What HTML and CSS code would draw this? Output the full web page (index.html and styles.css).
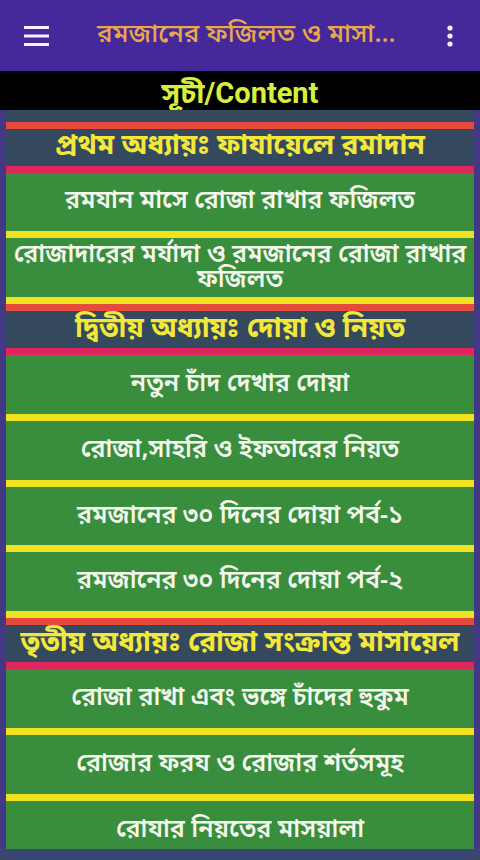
FILE: index.html
```html
<!DOCTYPE html>
<html lang="bn">
<head>
<meta charset="utf-8">
<meta name="viewport" content="width=480">
<title>রমজানের ফজিলত ও মাসায়েল</title>
<link rel="stylesheet" href="styles.css">
</head>
<body>
<header class="appbar">
  <button class="icon-btn menu" aria-label="menu">
    <svg width="26" height="22" viewBox="0 0 26 22"><rect x="0" y="1" width="25" height="3" fill="#f4f0ff"/><rect x="0" y="9.5" width="25" height="3" fill="#f4f0ff"/><rect x="0" y="18" width="25" height="3" fill="#f4f0ff"/></svg>
  </button>
  <h1 class="appbar-title">রমজানের ফজিলত ও মাসা...</h1>
  <button class="icon-btn more" aria-label="more">
    <svg width="8" height="22" viewBox="0 0 8 22"><circle cx="4" cy="3" r="2.6" fill="#f4f0ff"/><circle cx="4" cy="11" r="2.6" fill="#f4f0ff"/><circle cx="4" cy="19" r="2.6" fill="#f4f0ff"/></svg>
  </button>
</header>
<div class="content-title">সূচী/Content</div>
<main class="list">
  <section class="chapter">
    <h2 class="chapter-head">প্রথম অধ্যায়ঃ ফাযায়েলে রমাদান</h2>
    <div class="item">রমযান মাসে রোজা রাখার ফজিলত</div>
    <div class="item">রোজাদারের মর্যাদা ও রমজানের রোজা রাখার ফজিলত</div>
  </section>
  <section class="chapter">
    <h2 class="chapter-head">দ্বিতীয় অধ্যায়ঃ দোয়া ও নিয়ত</h2>
    <div class="item">নতুন চাঁদ দেখার দোয়া</div>
    <div class="item">রোজা,সাহরি ও ইফতারের নিয়ত</div>
    <div class="item">রমজানের ৩০ দিনের দোয়া পর্ব-১</div>
    <div class="item">রমজানের ৩০ দিনের দোয়া পর্ব-২</div>
  </section>
  <section class="chapter">
    <h2 class="chapter-head">তৃতীয় অধ্যায়ঃ রোজা সংক্রান্ত মাসায়েল</h2>
    <div class="item">রোজা রাখা এবং ভঙ্গে চাঁদের হুকুম</div>
    <div class="item">রোজার ফরয ও রোজার শর্তসমূহ</div>
    <div class="item">রোযার নিয়তের মাসয়ালা</div>
  </section>
</main>
<div class="bottom-edge"></div>
</body>
</html>
```

FILE: styles.css
```css
* { box-sizing: border-box; }
html, body {
  margin: 0;
  padding: 0;
}
body {
  width: 480px;
  height: 860px;
  overflow: hidden;
  background: #433883;
  display: flex;
  flex-direction: column;
  font-family: "Noto Sans Bengali", "Lohit Bengali", "FreeSans", "Noto Sans", Roboto, sans-serif;
}
.appbar {
  flex: none;
  height: 71px;
  background: #45299a;
  display: flex;
  align-items: center;
  padding: 0 26px 0 24px;
}
.icon-btn {
  background: none;
  border: 0;
  padding: 0;
  display: flex;
  align-items: center;
}
.menu { width: 26px; }
.more { width: 8px; margin-left: auto; }
.appbar-title {
  margin: 0 0 0 47px;
  font-size: 26px;
  line-height: 30px;
  font-weight: 500;
  color: #eaa948;
  white-space: nowrap;
}
.content-title {
  flex: none;
  height: 39px;
  padding-top: 4px;
  background: #000;
  color: #d6ef3c;
  font-family: Roboto, "Noto Sans Bengali", "Noto Sans", sans-serif;
  font-weight: 700;
  font-size: 29px;
  line-height: 30px;
  display: flex;
  align-items: center;
  justify-content: center;
}
.list {
  flex: 1;
  min-height: 0;
  overflow: hidden;
  margin: 0 6px;
  padding-top: 12px;
  background: #34495e;
}
.chapter-head {
  margin: 0;
  height: 50.5px;
  border-top: 7px solid #e54a3a;
  border-bottom: 7px solid #e0245e;
  background: #34495e;
  color: #f3e73a;
  font-size: 28px;
  line-height: 32px;
  font-weight: 700;
  display: flex;
  align-items: center;
  justify-content: center;
  white-space: nowrap;
}
.item {
  min-height: 65.9px;
  padding: 4px 2px;
  background: #388e3c;
  border-bottom: 7px solid #eee223;
  color: #f4f7ec;
  font-size: 25px;
  line-height: 25px;
  font-weight: 600;
  display: flex;
  align-items: center;
  justify-content: center;
  text-align: center;
}
.bottom-edge {
  flex: none;
  height: 11px;
  background: #3b4670;
}
```
